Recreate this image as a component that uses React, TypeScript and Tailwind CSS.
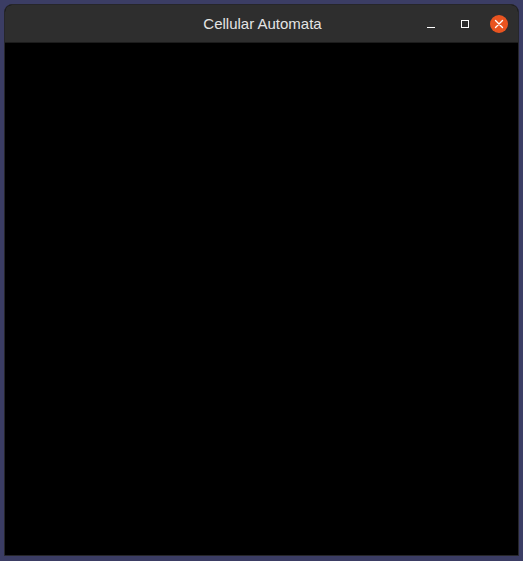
export default function App() {
  return (
    <div className="w-[523px] h-[561px] bg-[#3b3d64] pt-[4px] pl-[4px]" style={{ fontFamily: '"Liberation Sans", Arial, sans-serif' }}>
      <div className="w-[515px] h-[552px] flex flex-col rounded-t-[8px] overflow-hidden border border-[#26262a] bg-black">
        {/* Title bar */}
        <div className="h-[37px] shrink-0 bg-[#2e2e2e] flex items-center relative">
          <div className="flex-1 text-center text-[15px] text-[#e4e4e4] leading-none pl-[2px]">Cellular Automata</div>
          <div className="absolute right-[2px] top-0 h-full flex items-center">
            <div className="w-[34px] h-[34px] flex items-center justify-center">
              <div className="w-[8px] h-[1px] bg-white mt-[7px]" />
            </div>
            <div className="w-[34px] h-[34px] flex items-center justify-center">
              <div className="w-[8px] h-[8px] border border-white" />
            </div>
            <div className="w-[34px] h-[34px] flex items-center justify-center">
              <div className="w-[18px] h-[18px] rounded-full bg-[#e95420] flex items-center justify-center">
                <svg width="10" height="10" viewBox="0 0 10 10">
                  <path d="M1.5 1.5 L8.5 8.5 M8.5 1.5 L1.5 8.5" stroke="white" strokeWidth="1.4" strokeLinecap="round" />
                </svg>
              </div>
            </div>
          </div>
        </div>
        {/* Canvas */}
        <div className="flex-1 bg-black border-t border-[#1c1c1c]" />
      </div>
    </div>
  );
}
